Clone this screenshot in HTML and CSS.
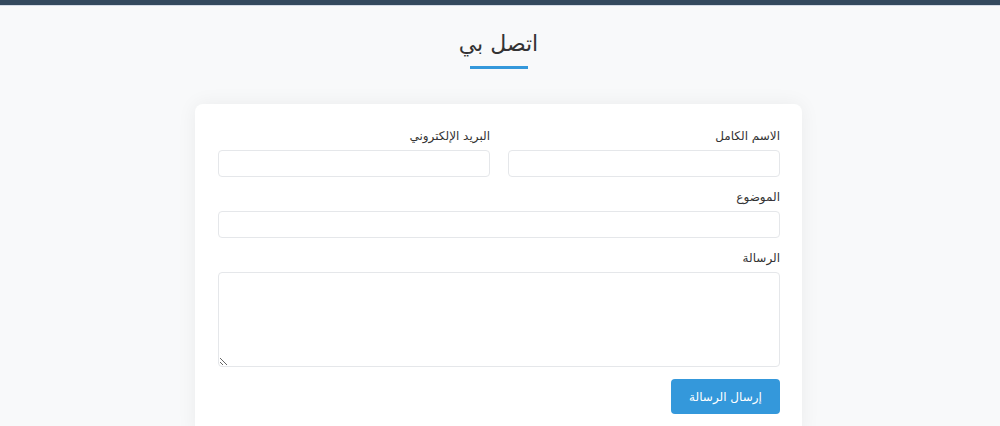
FILE: index.html
```html
<!DOCTYPE html>
<html lang="ar" dir="rtl">
<head>
  <meta charset="UTF-8" />
  <meta name="viewport" content="width=device-width, initial-scale=1.0"/>
  <link rel="stylesheet" href="styles.css">
</head>
<body>
  <div class="top-bar"></div>
  <section class="contact">
    <h1 class="section-title">اتصل بي</h1>
    <form class="contact-card" onsubmit="return false;">
      <div class="form-row">
        <div class="form-group">
          <label for="name">الاسم الكامل</label>
          <input type="text" id="name">
        </div>
        <div class="form-group">
          <label for="email">البريد الإلكتروني</label>
          <input type="email" id="email">
        </div>
      </div>
      <div class="form-group">
        <label for="subject">الموضوع</label>
        <input type="text" id="subject">
      </div>
      <div class="form-group">
        <label for="message">الرسالة</label>
        <textarea id="message"></textarea>
      </div>
      <button type="submit" class="send-button">إرسال الرسالة</button>
    </form>
  </section>
</body>
</html>
```

FILE: styles.css
```css
body {
  background-color: #f8f9fa;
  color: #333;
  font-family: 'DejaVu Sans', sans-serif;
  margin: 0;
  padding: 0;
}
.top-bar {
  height: 5px;
  background: #34495e;
  border-bottom: 1px solid #d5dbe6;
}
.contact {
  padding-top: 24px;
  padding-right: 3px;
}
.section-title {
  margin: 0 auto 35px;
  text-align: center;
  font-size: 22px;
  font-weight: normal;
  line-height: 28px;
  color: #333;
  padding-bottom: 8px;
  width: 58px;
  border-bottom: 3px solid #3498db;
  white-space: nowrap;
  display: flex;
  justify-content: center;
}
.contact-card {
  width: 607px;
  box-sizing: border-box;
  margin: 0 auto;
  background: #fff;
  border-radius: 8px;
  padding: 24px 22px 23px 23px;
  box-shadow: 0 0 20px rgba(0,0,0,0.06);
}
.form-row {
  display: grid;
  grid-template-columns: 1fr 1fr;
  gap: 18px;
}
.form-group {
  margin-bottom: 12px;
}
.form-group label {
  display: block;
  font-size: 12px;
  line-height: 16px;
  margin-bottom: 6px;
  color: #333;
}
.form-group input,
.form-group textarea {
  display: block;
  width: 100%;
  box-sizing: border-box;
  border: 1px solid #e5e7ea;
  border-radius: 4px;
  background: #fff;
  font-family: inherit;
  font-size: 13px;
}
.form-group input {
  height: 27px;
}
.form-group textarea {
  height: 95px;
  margin-top: 1px;
}
.send-button {
  display: block;
  margin-top: 11px;
  width: 109px;
  height: 35px;
  background: #3498db;
  color: #fff;
  border: none;
  border-radius: 4px;
  font-family: inherit;
  font-size: 12px;
  cursor: pointer;
}
.send-button:hover {
  background: #2d89c7;
}
```
